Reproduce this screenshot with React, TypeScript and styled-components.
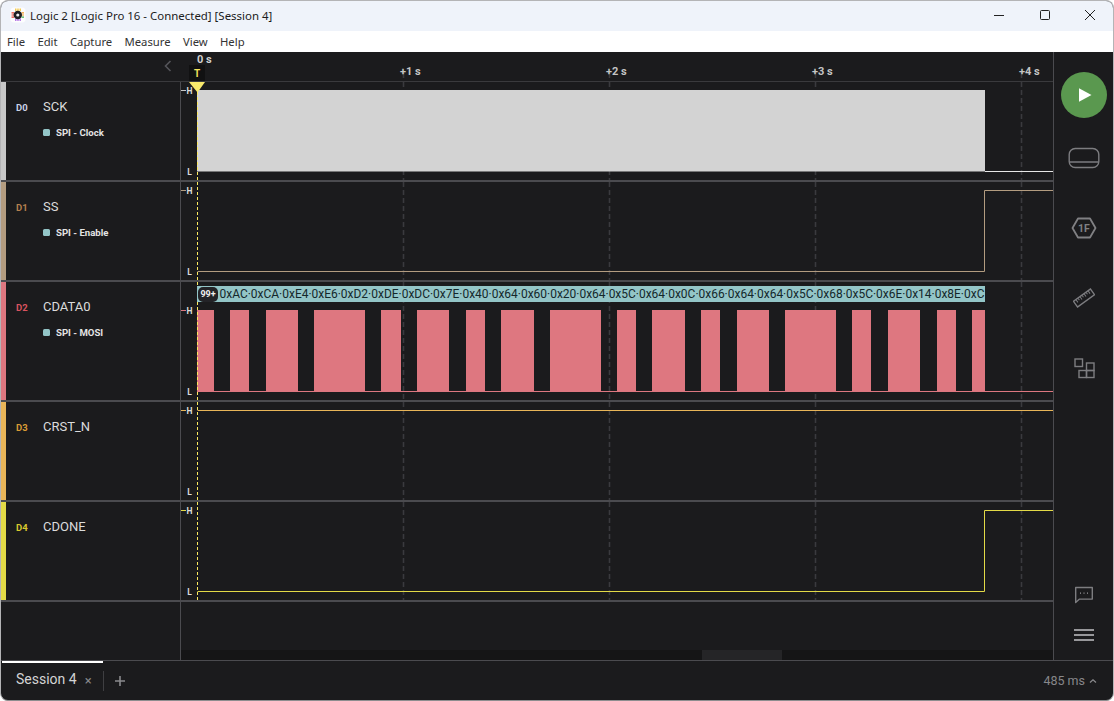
import styled, { createGlobalStyle } from 'styled-components';

const GRID = [222, 428, 634, 840];
const TRIGGER_X = 16.5;
const WAVE_WIDTH = 872;
const SIGNAL_END = 804;

const PULSES = [
  [197, 214], [230, 249], [266, 298], [314, 365], [381, 401], [417, 449],
  [466, 485], [501, 534], [550, 601], [617, 636], [652, 685], [701, 720],
  [737, 769], [785, 836], [852, 871], [888, 920], [937, 956], [972, 985],
];

const BYTES = [
  '0xAC', '0xCA', '0xE4', '0xE6', '0xD2', '0xDE', '0xDC', '0x7E', '0x40', '0x64',
  '0x60', '0x20', '0x64', '0x5C', '0x64', '0x0C', '0x66', '0x64', '0x64', '0x5C',
  '0x68', '0x5C', '0x6E', '0x14', '0x8E', '0xC',
];

type Channel = {
  id: string;
  name: string;
  color: string;
  idColor: string;
  analyzer?: string;
  height: number;
  high: number;
  low: number;
};

const CHANNELS: Channel[] = [
  { id: 'D0', name: 'SCK', color: '#c8c8c8', idColor: '#c9d2e6', analyzer: 'SPI - Clock', height: 100, high: 8.5, low: 89.5 },
  { id: 'D1', name: 'SS', color: '#b39c80', idColor: '#b5804f', analyzer: 'SPI - Enable', height: 100, high: 8.5, low: 89.5 },
  { id: 'D2', name: 'CDATA0', color: '#dd7780', idColor: '#d9535f', analyzer: 'SPI - MOSI', height: 120, high: 28.5, low: 109.5 },
  { id: 'D3', name: 'CRST_N', color: '#e8b558', idColor: '#d99b35', height: 100, high: 8.5, low: 89.5 },
  { id: 'D4', name: 'CDONE', color: '#e3da47', idColor: '#d8c92e', height: 100, high: 8.5, low: 89.5 },
];

const GlobalStyle = createGlobalStyle`
  html, body {
    margin: 0;
    padding: 0;
    background: #ffffff;
  }
  * {
    box-sizing: border-box;
  }
`;

const Signal = ({ channel }: { channel: Channel }) => {
  const { id, high, low, color, height } = channel;
  const inner = height - 2;
  const start = TRIGGER_X;
  return (
    <WaveSvg width={WAVE_WIDTH} height={inner} viewBox={`0 0 ${WAVE_WIDTH} ${inner}`}>
      {GRID.map((x) => (
        <line key={x} x1={x + 0.5} x2={x + 0.5} y1={0} y2={inner} stroke="#3a3a3e" strokeWidth="1.6" strokeDasharray="5 3" />
      ))}
      <line x1={0} x2={5} y1={high} y2={high} stroke={color} />
      {id === 'D0' && (
        <>
          <rect x={start - 0.5} y={high - 0.5} width={SIGNAL_END - start + 0.5} height={low - high + 0.5} fill="#d3d3d3" />
          <path d={`M${SIGNAL_END} ${low}H${WAVE_WIDTH}`} stroke="#e6e6e6" fill="none" />
        </>
      )}
      {(id === 'D1' || id === 'D4') && (
        <path d={`M${start} ${low}H${SIGNAL_END - 0.5}V${high}H${WAVE_WIDTH}`} stroke={color} fill="none" />
      )}
      {id === 'D2' && (
        <>
          <path d={`M${start} ${low}H${WAVE_WIDTH}`} stroke={color} fill="none" />
          {PULSES.map(([a, b]) => (
            <rect key={a} x={a - 181} y={high - 0.5} width={b - a} height={low - high + 1} fill="#de7780" />
          ))}
        </>
      )}
      {id === 'D3' && <path d={`M${start} ${high}H${WAVE_WIDTH}`} stroke={color} fill="none" />}
      <line x1={TRIGGER_X} x2={TRIGGER_X} y1={0} y2={inner} stroke="#fbe95f" strokeDasharray="3 2" />
      {id === 'D0' && <polygon points="8,0 24,0 16.5,10.5" fill="#f8ea6c" />}
    </WaveSvg>
  );
};

const App = () => {
  return (
    <>
      <GlobalStyle />
      <Window>
        <TitleBar>
          <LogoBox>
            <svg width="16" height="16" viewBox="0 0 16 16">
              <rect x="0.5" y="0.5" width="15" height="15" rx="3.5" fill="#fdfdfe" />
              <path d="M1.5 5.8h2.5M1.5 8h2.5M1.5 10.2h2.5" stroke="#e8402f" strokeWidth="1.2" />
              <path d="M11.5 5.8h2.5M11.5 8h2.5" stroke="#f09a2a" strokeWidth="1.2" />
              <path d="M11.5 10.2h2.5" stroke="#3fae4f" strokeWidth="1.2" />
              <path d="M5.8 1.5v2.5M8 1.5v2.5M10.2 1.5v2.5" stroke="#f2c029" strokeWidth="1.2" />
              <path d="M5.8 11.5v2.5M8 11.5v2.5M10.2 11.5v2.5" stroke="#a45be0" strokeWidth="1.2" />
              <circle cx="7.8" cy="8" r="4.2" fill="#1f1f22" />
              <circle cx="7.8" cy="8" r="1.6" fill="#f2f2f2" />
            </svg>
          </LogoBox>
          <TitleText>Logic 2 [Logic Pro 16 - Connected] [Session 4]</TitleText>
          <WinControls>
            <WinButton>
              <svg width="12" height="12" viewBox="0 0 12 12">
                <path d="M1 6.5h10" stroke="#222" />
              </svg>
            </WinButton>
            <WinButton>
              <svg width="12" height="12" viewBox="0 0 12 12">
                <rect x="1.5" y="1.5" width="9" height="9" rx="1" fill="none" stroke="#222" />
              </svg>
            </WinButton>
            <WinButton>
              <svg width="12" height="12" viewBox="0 0 12 12">
                <path d="M1 1l10 10M11 1L1 11" stroke="#222" />
              </svg>
            </WinButton>
          </WinControls>
        </TitleBar>

        <MenuBar>
          {['File', 'Edit', 'Capture', 'Measure', 'View', 'Help'].map((m) => (
            <MenuItem key={m}>{m}</MenuItem>
          ))}
        </MenuBar>

        <Workspace>
          <Content>
            <Header>
              <HeaderLeft>
                <svg width="10" height="14" viewBox="0 0 10 14">
                  <path d="M7.5 2L2.5 7l5 5" stroke="#55555a" strokeWidth="1.6" fill="none" />
                </svg>
              </HeaderLeft>
              <Ruler>
                <RulerSvg width={WAVE_WIDTH} height={29} viewBox={`0 0 ${WAVE_WIDTH} 29`}>
                  {GRID.map((x) => (
                    <line key={x} x1={x + 0.5} x2={x + 0.5} y1={21} y2={29} stroke="#3a3a3e" strokeWidth="1.6" strokeDasharray="5 3" />
                  ))}
                </RulerSvg>
                <ZeroLabel>0 s</ZeroLabel>
                <TriggerTag>T</TriggerTag>
                <TimeLabel $x={219}>+1 s</TimeLabel>
                <TimeLabel $x={425}>+2 s</TimeLabel>
                <TimeLabel $x={631}>+3 s</TimeLabel>
                <TimeLabel $x={838}>+4 s</TimeLabel>
              </Ruler>
            </Header>

            {CHANNELS.map((c) => (
              <Row key={c.id} $height={c.height}>
                <ChannelInfo>
                  <Strip $color={c.color} />
                  <ChannelId $color={c.idColor}>{c.id}</ChannelId>
                  <ChannelText>
                    <ChannelName>{c.name}</ChannelName>
                    {c.analyzer && (
                      <Analyzer>
                        <AnalyzerDot />
                        {c.analyzer}
                      </Analyzer>
                    )}
                  </ChannelText>
                </ChannelInfo>
                <Wave>
                  <Signal channel={c} />
                  <LevelMark $top={c.high - 5}>H</LevelMark>
                  <LevelMark $top={c.low - 5}>L</LevelMark>
                  {c.id === 'D2' && (
                    <DecodeBand>
                      <CountBadge>99+</CountBadge>
                      <DecodeText>{BYTES.join('·')}</DecodeText>
                    </DecodeBand>
                  )}
                </Wave>
              </Row>
            ))}

            <Footer>
              <FooterLeft />
              <FooterRight>
                <ScrollTrack>
                  <ScrollThumb />
                </ScrollTrack>
              </FooterRight>
            </Footer>
          </Content>

          <Sidebar>
            <PlayButton>
              <svg width="16" height="16" viewBox="0 0 16 16">
                <path d="M2 1.2L14.5 8 2 14.8z" fill="#ffffff" />
              </svg>
            </PlayButton>
            <ToolSlot>
              <svg width="32" height="22" viewBox="0 0 32 22">
                <rect x="1.2" y="1.5" width="29.6" height="19" rx="6" fill="none" stroke="#7d7d80" strokeWidth="1.4" />
                <path d="M1.5 15h29" stroke="#7d7d80" strokeWidth="1.4" />
              </svg>
            </ToolSlot>
            <ToolSlot>
              <svg width="26" height="22" viewBox="0 0 26 22">
                <path d="M7 1.5h12L24.5 11 19 20.5H7L1.5 11z" fill="none" stroke="#808083" strokeWidth="1.8" strokeLinejoin="round" />
                <text x="13" y="15" textAnchor="middle" fontFamily="Roboto, sans-serif" fontWeight="700" fontSize="10.5" fill="#808083">1F</text>
              </svg>
            </ToolSlot>
            <ToolSlot>
              <svg width="22" height="20" viewBox="0 0 22 20">
                <g transform="rotate(-36 11 10)" fill="none" stroke="#7d7d80">
                  <rect x="0.5" y="6.5" width="21" height="7" strokeWidth="1.3" />
                  <path d="M3.5 7v3M6 7v2M8.5 7v3M11 7v2M13.5 7v3M16 7v2M18.5 7v3" strokeWidth="1" />
                </g>
              </svg>
            </ToolSlot>
            <ToolSlot>
              <svg width="22" height="21" viewBox="0 0 22 21">
                <g fill="none" stroke="#7d7d80" strokeWidth="1.4">
                  <rect x="2" y="1" width="7.5" height="7.5" />
                  <rect x="13.5" y="5" width="7.5" height="7.5" />
                  <rect x="6" y="12.5" width="7.5" height="7" />
                  <rect x="13.5" y="12.5" width="7.5" height="7" />
                </g>
              </svg>
            </ToolSlot>
            <BottomTools>
              <ToolSlotSmall>
                <svg width="20" height="18" viewBox="0 0 20 18">
                  <path d="M1.7 1.5h16.6v11.6H5.5L1.7 16.5z" fill="none" stroke="#7d7d80" strokeWidth="1.4" strokeLinejoin="round" />
                  <path d="M6 7.2h1M9.5 7.2h1M13 7.2h1" stroke="#9a9a9d" strokeWidth="1.2" />
                </svg>
              </ToolSlotSmall>
              <ToolSlotSmall>
                <svg width="20" height="14" viewBox="0 0 20 14">
                  <path d="M0 2h20M0 7h20M0 12h20" stroke="#98989b" strokeWidth="2" />
                </svg>
              </ToolSlotSmall>
            </BottomTools>
          </Sidebar>
        </Workspace>

        <TabBar>
          <ActiveTab>
            <TabTitle>Session 4</TabTitle>
            <TabClose>×</TabClose>
          </ActiveTab>
          <TabDivider />
          <AddTab>
            <svg width="12" height="12" viewBox="0 0 12 12">
              <path d="M6 1v10M1 6h10" stroke="#8a8a8d" strokeWidth="1.6" />
            </svg>
          </AddTab>
          <SampleRate>
            485 ms
            <svg width="8" height="6" viewBox="0 0 8 6">
              <path d="M1 4.5L4 1.7l3 2.8" stroke="#8a8a8d" strokeWidth="1.2" fill="none" />
            </svg>
          </SampleRate>
        </TabBar>
      </Window>
    </>
  );
};

const Window = styled.div`
  width: 1114px;
  height: 701px;
  display: flex;
  flex-direction: column;
  overflow: hidden;
  border: 1px solid #b4b4b6;
  border-bottom-color: #8d8d8f;
  border-radius: 8px;
  background: #1b1b1d;
`;

const TitleBar = styled.div`
  height: 30px;
  flex: none;
  display: flex;
  align-items: center;
  padding-left: 9px;
  padding-bottom: 2px;
  background: #eff3fa;
`;

const LogoBox = styled.div`
  width: 16px;
  height: 16px;
  display: flex;
`;

const TitleText = styled.div`
  margin-left: 4px;
  font: 11.45px 'Noto Sans', sans-serif;
  color: #1c1c1c;
`;

const WinControls = styled.div`
  margin-left: auto;
  display: flex;
  height: 100%;
`;

const WinButton = styled.div`
  width: 45.5px;
  display: flex;
  align-items: center;
  justify-content: center;
`;

const MenuBar = styled.div`
  height: 21px;
  flex: none;
  display: flex;
  align-items: center;
  gap: 12.3px;
  padding-left: 6px;
  background: #ffffff;
`;

const MenuItem = styled.span`
  font: 11.3px 'Noto Sans', sans-serif;
  color: #333;
`;

const Workspace = styled.div`
  flex: 1;
  min-height: 0;
  display: flex;
`;

const Content = styled.div`
  flex: 1;
  min-width: 0;
  display: flex;
  flex-direction: column;
`;

const Header = styled.div`
  height: 30px;
  flex: none;
  display: flex;
  border-bottom: 1px solid #3a3a3d;
`;

const HeaderLeft = styled.div`
  width: 180px;
  flex: none;
  display: flex;
  align-items: center;
  justify-content: flex-end;
  padding-right: 8px;
  padding-bottom: 2px;
`;

const Ruler = styled.div`
  position: relative;
  flex: 1;
`;

const RulerSvg = styled.svg`
  display: block;
`;

const ZeroLabel = styled.span`
  position: absolute;
  left: 16px;
  top: 1px;
  font: 700 11px Roboto, sans-serif;
  color: #d0d0d0;
`;

const TriggerTag = styled.span`
  position: absolute;
  left: 8px;
  top: 13px;
  width: 16px;
  height: 16px;
  display: flex;
  align-items: center;
  justify-content: center;
  background: #111112;
  font: 700 10px Roboto, sans-serif;
  color: #f4e35c;
`;

const TimeLabel = styled.span<{ $x: number }>`
  position: absolute;
  left: ${(p) => p.$x}px;
  top: 13px;
  font: 700 11px Roboto, sans-serif;
  color: #c4c4c4;
  white-space: nowrap;
`;

const Row = styled.div<{ $height: number }>`
  height: ${(p) => p.$height}px;
  flex: none;
  display: flex;
  border-bottom: 2px solid #4b4b4f;
`;

const ChannelInfo = styled.div`
  width: 180px;
  flex: none;
  display: flex;
  border-right: 1px solid #4b4b4f;
`;

const Strip = styled.div<{ $color: string }>`
  width: 5px;
  flex: none;
  background: ${(p) => p.$color};
`;

const ChannelId = styled.span<{ $color: string }>`
  width: 27px;
  flex: none;
  margin-left: 10px;
  padding-top: 20px;
  font: 700 9.5px Roboto, sans-serif;
  color: ${(p) => p.$color};
`;

const ChannelText = styled.div`
  padding-top: 17px;
  display: flex;
  flex-direction: column;
  gap: 13px;
`;

const ChannelName = styled.span`
  font: 13px Roboto, sans-serif;
  line-height: 15px;
  color: #dcdcdc;
`;

const Analyzer = styled.span`
  display: flex;
  align-items: center;
  gap: 6px;
  font: 700 9.6px Roboto, sans-serif;
  color: #e4e4e4;
`;

const AnalyzerDot = styled.i`
  width: 7px;
  height: 7px;
  border-radius: 1.5px;
  background: #93c5c7;
`;

const Wave = styled.div`
  position: relative;
  flex: 1;
  min-width: 0;
`;

const WaveSvg = styled.svg`
  display: block;
`;

const LevelMark = styled.span<{ $top: number }>`
  position: absolute;
  left: 4.5px;
  top: ${(p) => p.$top}px;
  width: 8px;
  text-align: center;
  font: 700 8.5px/10px Roboto, sans-serif;
  color: #dcdcdc;
`;

const DecodeBand = styled.div`
  position: absolute;
  left: 16px;
  top: 4px;
  width: 788px;
  height: 16px;
  display: flex;
  align-items: center;
  overflow: hidden;
  background: #93c5c7;
`;

const CountBadge = styled.span`
  width: 20px;
  height: 15px;
  flex: none;
  margin-left: 1px;
  border-radius: 5px;
  display: flex;
  align-items: center;
  justify-content: center;
  background: #232327;
  font: 700 9px Roboto, sans-serif;
  color: #f0f0f0;
`;

const DecodeText = styled.span`
  margin-left: 1.5px;
  font: 11.97px Roboto, sans-serif;
  color: #14282b;
  white-space: nowrap;
`;

const Footer = styled.div`
  flex: 1;
  display: flex;
`;

const FooterLeft = styled.div`
  width: 180px;
  flex: none;
  border-right: 1px solid #4b4b4f;
`;

const FooterRight = styled.div`
  flex: 1;
  display: flex;
  flex-direction: column;
  justify-content: flex-end;
`;

const ScrollTrack = styled.div`
  height: 10px;
  display: flex;
  background: #151516;
`;

const ScrollThumb = styled.div`
  width: 80px;
  margin-left: 521px;
  background: #252527;
`;

const Sidebar = styled.div`
  width: 60px;
  flex: none;
  display: flex;
  flex-direction: column;
  align-items: center;
  padding: 20px 0 5px;
  border-left: 1px solid #4b4b4f;
`;

const PlayButton = styled.div`
  width: 46px;
  height: 46px;
  flex: none;
  border-radius: 50%;
  display: flex;
  align-items: center;
  justify-content: center;
  padding-left: 2px;
  background: #5a984f;
`;

const ToolSlot = styled.div`
  height: 70px;
  flex: none;
  display: flex;
  align-items: center;
  justify-content: center;
  &:nth-child(2) {
    margin-top: 5px;
  }
`;

const BottomTools = styled.div`
  margin-top: auto;
  display: flex;
  flex-direction: column;
`;

const ToolSlotSmall = styled.div`
  height: 40px;
  display: flex;
  align-items: center;
  justify-content: center;
`;

const TabBar = styled.div`
  height: 40px;
  flex: none;
  display: flex;
  align-items: center;
  border-top: 1px solid #4b4b4f;
`;

const ActiveTab = styled.div`
  width: 101px;
  height: 100%;
  flex: none;
  margin-left: 1px;
  display: flex;
  align-items: center;
  padding-left: 14px;
  padding-bottom: 6px;
  border-top: 2px solid #ffffff;
`;

const TabTitle = styled.span`
  font: 14px Roboto, sans-serif;
  color: #d4d4d4;
`;

const TabClose = styled.span`
  margin-left: 8px;
  margin-top: 3px;
  font: 13px Roboto, sans-serif;
  color: #87878a;
`;

const TabDivider = styled.div`
  width: 1px;
  height: 20px;
  background: #3f3f42;
`;

const AddTab = styled.div`
  width: 32px;
  display: flex;
  justify-content: center;
`;

const SampleRate = styled.div`
  margin-left: auto;
  margin-right: 16px;
  display: flex;
  align-items: center;
  gap: 4px;
  font: 12.5px Roboto, sans-serif;
  color: #87878a;
`;

export default App;
